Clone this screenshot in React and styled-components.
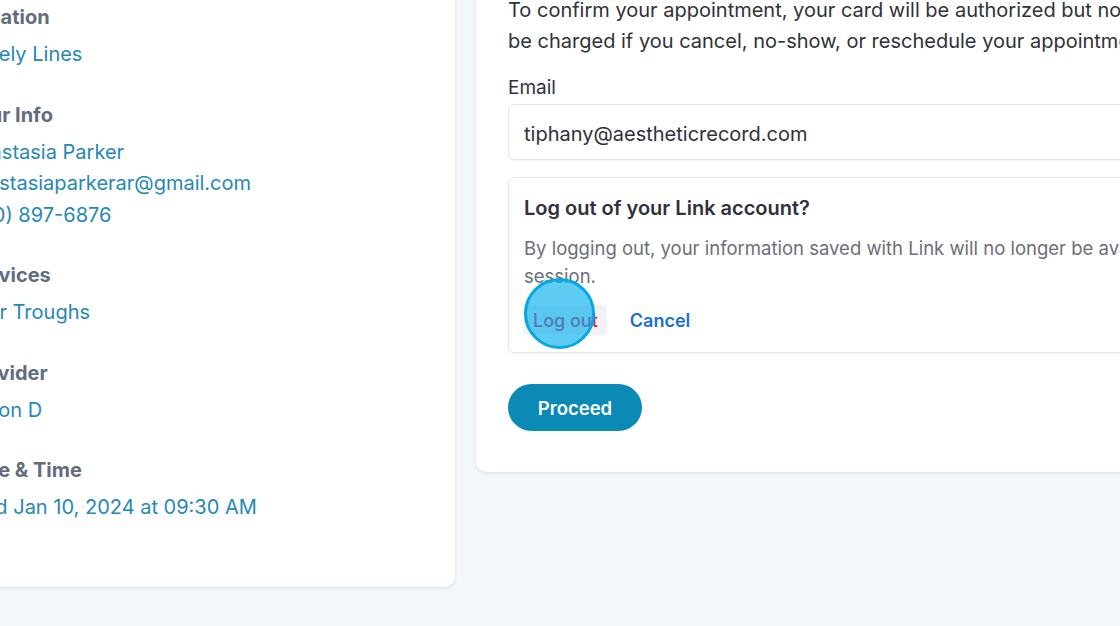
import React from "react";
import styled, { createGlobalStyle } from "styled-components";

const Global = createGlobalStyle`
  html, body { margin: 0; padding: 0; }
  body {
    background: #f3f7fa;
    font-family: Inter, "Noto Sans", "Liberation Sans", sans-serif;
    overflow: hidden;
    width: 1120px;
    height: 626px;
  }
`;

const Page = styled.div`
  display: flex;
  align-items: flex-start;
  gap: 21px;
  margin-top: -60px;
  margin-left: -65px;
`;

const SummaryCard = styled.aside`
  flex: 0 0 520px;
  box-sizing: border-box;
  background: #fff;
  border-radius: 10px;
  box-shadow: 0 1px 3px rgba(30, 40, 60, 0.12);
  padding: 62px 30px 63px;
  display: flex;
  flex-direction: column;
  gap: 29px;
`;

const Section = styled.section`
  display: flex;
  flex-direction: column;
`;

const Heading = styled.h3`
  margin: 0 0 7px;
  font-size: 20px;
  line-height: 30px;
  font-weight: 700;
  color: #616d7e;
`;

const Value = styled.div`
  font-size: 20px;
  line-height: 31.5px;
  color: #2688b4;
  white-space: nowrap;
`;

const PaymentCard = styled.main`
  flex: 0 0 900px;
  box-sizing: border-box;
  background: #fff;
  border-radius: 10px;
  box-shadow: 0 1px 3px rgba(30, 40, 60, 0.12);
  padding: 54.5px 38px 41px 32px;
  display: flex;
  flex-direction: column;
  align-items: flex-start;
`;

const Notice = styled.p`
  margin: 0;
  font-size: 20px;
  line-height: 31px;
  color: #2f3237;
  white-space: nowrap;
`;

const Label = styled.label`
  margin-top: 19.5px;
  font-size: 19px;
  line-height: 24px;
  color: #30313d;
`;

const Input = styled.div`
  align-self: stretch;
  margin-top: 4px;
  height: 56px;
  box-sizing: border-box;
  border: 1px solid #e6e6e6;
  border-radius: 6px;
  box-shadow: 0 1px 2px rgba(0, 0, 0, 0.04);
  padding: 3px 15px 0;
  display: flex;
  align-items: center;
  font-size: 20px;
  color: #30313d;
`;

const LinkBox = styled.div`
  align-self: stretch;
  margin-top: 17px;
  box-sizing: border-box;
  border: 1px solid #e6e6e6;
  border-radius: 6px;
  box-shadow: 0 1px 3px rgba(0, 0, 0, 0.06);
  padding: 17px 15px 17px;
`;

const LinkTitle = styled.h4`
  margin: 0;
  font-size: 20px;
  line-height: 26px;
  font-weight: 600;
  color: #30313d;
`;

const LinkText = styled.p`
  margin: 13px 0 0;
  font-size: 18.5px;
  line-height: 28px;
  color: #6d6e78;
  white-space: nowrap;
`;

const Actions = styled.div`
  margin-top: 15px;
  display: flex;
  align-items: center;
  gap: 23px;
`;

const ClickArea = styled.div`
  position: relative;
`;

const LogoutButton = styled.button`
  height: 30px;
  padding: 0 9px;
  border: none;
  border-radius: 5px;
  background: #f2f2f4;
  font-family: inherit;
  font-size: 18px;
  font-weight: 500;
  color: #df1b41;
`;

const ClickMarker = styled.span`
  position: absolute;
  left: 0;
  top: -27px;
  width: 71px;
  height: 71px;
  box-sizing: border-box;
  border-radius: 50%;
  border: 3px solid #06a8e2;
  background: rgba(0, 175, 238, 0.63);
  pointer-events: none;
`;

const CancelButton = styled.button`
  border: none;
  background: none;
  padding: 0;
  font-family: inherit;
  font-size: 18px;
  font-weight: 600;
  color: #1a6fd6;
`;

const Proceed = styled.button`
  margin-top: 31px;
  height: 47px;
  width: 134px;
  border: none;
  border-radius: 24px;
  background: #0a8ab5;
  color: #fff;
  font-family: inherit;
  font-size: 18.5px;
  font-weight: 600;
`;

const summary = [
  { title: "Location", values: ["Lovely Lines"] },
  {
    title: "Your Info",
    values: ["Anastasia Parker", "anastasiaparkerar@gmail.com", "(310) 897-6876"],
  },
  { title: "Services", values: ["Tear Troughs"] },
  { title: "Provider", values: ["Jason D"] },
  { title: "Date & Time", values: ["Wed Jan 10, 2024 at 09:30 AM"] },
];

export default function App() {
  return (
    <>
      <Global />
      <Page>
        <SummaryCard>
          {summary.map((s) => (
            <Section key={s.title}>
              <Heading>{s.title}</Heading>
              {s.values.map((v) => (
                <Value key={v}>{v}</Value>
              ))}
            </Section>
          ))}
        </SummaryCard>
        <PaymentCard>
          <Notice>
            To confirm your appointment, your card will be authorized but not charged. You will only
            <br />
            be charged if you cancel, no-show, or reschedule your appointment within 24 hours.
          </Notice>
          <Label>Email</Label>
          <Input>tiphany@aestheticrecord.com</Input>
          <LinkBox>
            <LinkTitle>Log out of your Link account?</LinkTitle>
            <LinkText>
              By logging out, your information saved with Link will no longer be available in this
              <br />
              session.
            </LinkText>
            <Actions>
              <ClickArea>
                <LogoutButton>Log out</LogoutButton>
                <ClickMarker />
              </ClickArea>
              <CancelButton>Cancel</CancelButton>
            </Actions>
          </LinkBox>
          <Proceed>Proceed</Proceed>
        </PaymentCard>
      </Page>
    </>
  );
}
